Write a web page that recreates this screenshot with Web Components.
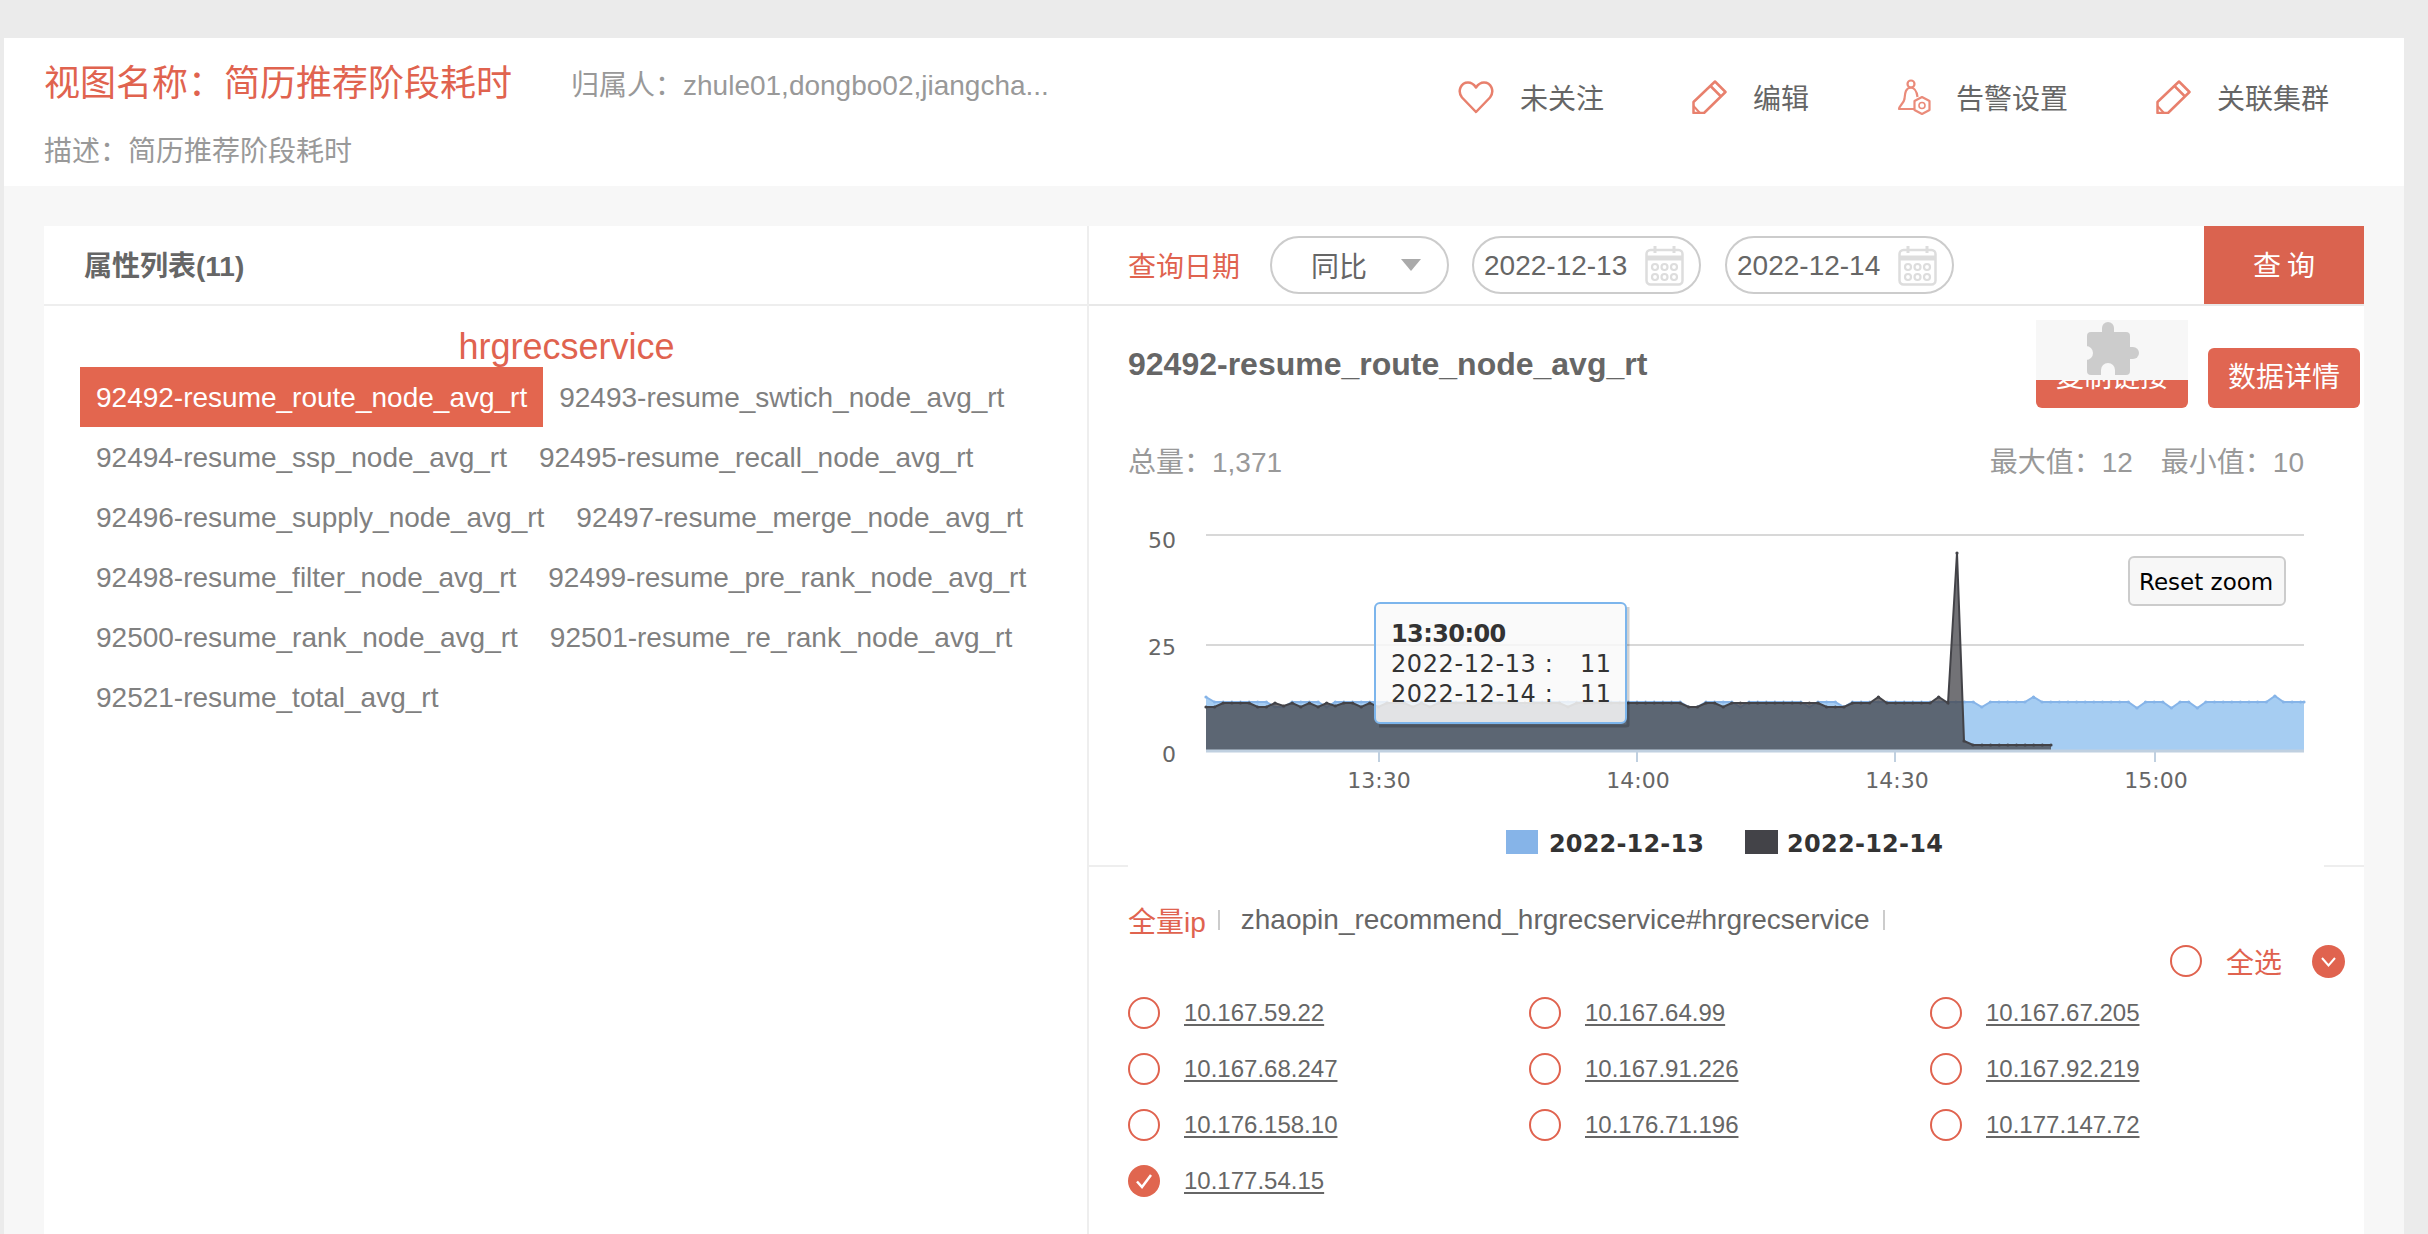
<!DOCTYPE html>
<html lang="zh">
<head>
<meta charset="utf-8">
<title>视图</title>
<style>
  html, body { margin: 0; height: 1234px; overflow: hidden; background: #ebebeb; }
  body { font-family: "Liberation Sans", "Noto Sans CJK SC", sans-serif; font-size: 28px; color: #666; }
</style>
</head>
<body>
<app-page>
  <view-header slot="header">
    <span slot="title">视图名称：简历推荐阶段耗时</span>
    <span slot="owner">归属人：zhule01,dongbo02,jiangcha...</span>
    <span slot="desc">描述：简历推荐阶段耗时</span>
    <action-item slot="actions" style="margin-right:88px">
      <svg slot="icon" width="36" height="33" viewBox="0 0 36 33" fill="none" stroke="#e8806d" stroke-width="2.5" stroke-linejoin="round"><path d="M18 31 L4 16.500 C-1 10 3 1.500 10 1.500 C13.500 1.500 16 3.500 18 6.500 C20 3.500 22.500 1.500 26 1.500 C33 1.500 37 10 32 16.500 Z"/></svg>
      未关注
    </action-item>
    <action-item slot="actions" style="margin-right:88px">
      <svg slot="icon" width="35" height="34" viewBox="0 0 35 34" fill="none" stroke="#e8806d" stroke-width="2.5" stroke-linejoin="round"><path d="M23 1.500 L33.500 12 L12 33 H1.500 V22 Z M18.500 6 L29 16.500"/><path d="M1.500 26 L8 33" stroke-width="2"/></svg>
      编辑
    </action-item>
    <action-item slot="actions" style="margin-right:88px;--gap:23px">
      <svg slot="icon" width="36" height="36" viewBox="0 0 36 36" fill="none" stroke="#ea8b7a" stroke-width="2.2" stroke-linejoin="round"><circle cx="14" cy="5" r="3.500"/><path d="M14 8.500 C8 9 8 15 7.500 20 C7 24 2 27 2 30 H18"/><path d="M14 8.500 C19 9 20 14 20.500 18"/><path d="M25 18 L32.500 22 V31 L25 35 L17.500 31 V22 Z" fill="#fff"/><circle cx="25" cy="26.500" r="3" stroke-width="1.600"/></svg>
      告警设置
    </action-item>
    <action-item slot="actions">
      <svg slot="icon" width="35" height="34" viewBox="0 0 35 34" fill="none" stroke="#e8806d" stroke-width="2.5" stroke-linejoin="round"><path d="M23 1.500 L33.500 12 L12 33 H1.500 V22 Z M18.500 6 L29 16.500"/><path d="M1.500 26 L8 33" stroke-width="2"/></svg>
      关联集群
    </action-item>
  </view-header>

  <attr-panel slot="left">
    <tag-item selected>92492-resume_route_node_avg_rt</tag-item>
    <tag-item>92493-resume_swtich_node_avg_rt</tag-item>
    <tag-item>92494-resume_ssp_node_avg_rt</tag-item>
    <tag-item>92495-resume_recall_node_avg_rt</tag-item>
    <tag-item>92496-resume_supply_node_avg_rt</tag-item>
    <tag-item>92497-resume_merge_node_avg_rt</tag-item>
    <tag-item>92498-resume_filter_node_avg_rt</tag-item>
    <tag-item>92499-resume_pre_rank_node_avg_rt</tag-item>
    <tag-item>92500-resume_rank_node_avg_rt</tag-item>
    <tag-item>92501-resume_re_rank_node_avg_rt</tag-item>
    <tag-item>92521-resume_total_avg_rt</tag-item>
  </attr-panel>

  <detail-panel slot="right">
    <query-bar slot="bar"></query-bar>
    <metric-head slot="head"></metric-head>
    <trend-chart slot="chart"></trend-chart>
    <ip-section slot="ips">
      <ip-check>10.167.59.22</ip-check>
      <ip-check>10.167.64.99</ip-check>
      <ip-check>10.167.67.205</ip-check>
      <ip-check>10.167.68.247</ip-check>
      <ip-check>10.167.91.226</ip-check>
      <ip-check>10.167.92.219</ip-check>
      <ip-check>10.176.158.10</ip-check>
      <ip-check>10.176.71.196</ip-check>
      <ip-check>10.177.147.72</ip-check>
      <ip-check checked>10.177.54.15</ip-check>
    </ip-section>
  </detail-panel>
</app-page>

<script>
const define = (name, html, init) => {
  customElements.define(name, class extends HTMLElement {
    constructor() {
      super();
      this.attachShadow({ mode: 'open' }).innerHTML = html;
      if (init) init(this.shadowRoot, this);
    }
  });
};

define('app-page', `
  <style>
    :host { display: block; padding: 38px 24px 0 4px; }
    .main { display: flex; height: 1048px; padding: 40px 40px 0; box-sizing: border-box; background: #f7f7f7; overflow: hidden; }
    .left { display: block; width: 1043px; flex: none; }
    .right { display: block; flex: 1; min-width: 0; }
    .sep { width: 2px; background: #eee; flex: none; }
  </style>
  <slot name="header"></slot>
  <div class="main">
    <div class="left"><slot name="left"></slot></div>
    <div class="sep"></div>
    <div class="right"><slot name="right"></slot></div>
  </div>`);

define('view-header', `
  <style>
    :host { display: flex; justify-content: space-between; height: 148px; background: #fff; box-sizing: border-box; padding: 17px 75px 0 40px; }
    .line { display: flex; height: 50px; align-items: center; }
    .title { font-size: 36px; color: #e0634f; margin-right: 59px; }
    .owner { color: #999; padding-top: 5px; }
    .desc { margin-top: 27px; line-height: 40px; color: #999; }
    .actions { display: flex; height: 50px; margin-top: 17px; align-items: center; }
  </style>
  <div>
    <div class="line"><span class="title"><slot name="title"></slot></span><span class="owner"><slot name="owner"></slot></span></div>
    <div class="desc"><slot name="desc"></slot></div>
  </div>
  <div class="actions"><slot name="actions"></slot></div>`);

define('action-item', `
  <style>
    :host { display: inline-flex; align-items: center; gap: var(--gap, 26px); color: #666; }
    ::slotted(svg) { display: block; }
  </style>
  <slot name="icon"></slot><span><slot></slot></span>`);

define('attr-panel', `
  <style>
    :host { display: block; background: #fff; height: 100%; }
    .head { height: 78px; line-height: 82px; padding-left: 40px; font-weight: 700; color: #666; border-bottom: 2px solid #eee; }
    .svc { padding: 20px 0 0 2px; height: 41px; line-height: 41px; text-align: center; font-size: 36px; color: #e0634f; }
    .tags { display: flex; flex-wrap: wrap; padding: 0 0 0 36px; width: 980px; }
  </style>
  <div class="head">属性列表(11)</div>
  <div class="svc">hrgrecservice</div>
  <div class="tags"><slot></slot></div>`);

define('tag-item', `
  <style>
    :host { display: block; padding: 0 16px; line-height: 62px; height: 60px; color: #808080; white-space: nowrap; }
    :host([selected]) { background: #e3664f; color: #fff; }
  </style>
  <slot></slot>`);

define('detail-panel', `
  <style>
    :host { display: block; background: #fff; height: 100%; }
  </style>
  <slot name="bar"></slot><slot name="head"></slot><slot name="chart"></slot><slot name="ips"></slot>`);

define('query-bar', `
  <style>
    :host { display: flex; align-items: center; height: 78px; padding-left: 39px; border-bottom: 2px solid #e8e8e8; }
    .label { color: #e0634f; margin-right: 30px; }
    .select { display: flex; align-items: center; box-sizing: border-box; width: 179px; height: 58px; margin-right: 23px; padding-left: 39px; border: 2px solid #ccc; border-radius: 29px; color: #666; }
    .select i { width: 0; height: 0; margin-left: 34px; border: 10px solid transparent; border-top: 12px solid #aaa; border-bottom: 0; }
    date-pill { margin-right: 24px; }
    .go { margin-left: auto; width: 160px; height: 78px; line-height: 82px; box-sizing: border-box; padding-left: 6px; text-align: center; background: #da634f; color: #fff; letter-spacing: 6px; }
  </style>
  <span class="label">查询日期</span>
  <div class="select">同比<i></i></div>
  <date-pill>2022-12-13</date-pill>
  <date-pill>2022-12-14</date-pill>
  <div class="go">查询</div>`);

define('date-pill', `
  <style>
    :host { display: flex; align-items: center; box-sizing: border-box; width: 229px; height: 58px; padding-left: 10px; border: 2px solid #ccc; border-radius: 29px; color: #666; line-height: 36px; }
    span { padding-top: 2px; }
    svg { margin-left: 18px; flex: none; }
  </style>
  <span><slot></slot></span>
  <svg width="39" height="41" viewBox="0 0 39 41" fill="none">
    <rect x="1.500" y="5" width="36" height="34.500" rx="4" stroke="#ddd" stroke-width="2.500"/>
    <path d="M1.500 13 H37.500" stroke="#ddd" stroke-width="5"/>
    <path d="M10 1 V8 M29 1 V8" stroke="#ddd" stroke-width="3"/>
    <g stroke="#ddd" stroke-width="2.200">
      <circle cx="10" cy="22" r="3"/><circle cx="19.500" cy="22" r="3"/><circle cx="29" cy="22" r="3"/>
      <circle cx="10" cy="32" r="3"/><circle cx="19.500" cy="32" r="3"/><circle cx="29" cy="32" r="3"/>
    </g>
  </svg>`);

define('metric-head', `
  <style>
    :host { display: block; position: relative; height: 177px; box-sizing: border-box; padding: 42px 60px 0 39px; }
    .top { display: flex; height: 60px; margin-right: -56px; }
    .name { font-size: 32px; line-height: 32px; font-weight: 700; color: #666; flex: 1; }
    .btn { width: 152px; height: 60px; line-height: 60px; text-align: center; background: #e06652; color: #fff; border-radius: 6px; margin-left: 20px; }
    .stats { display: flex; justify-content: space-between; margin-top: 35px; line-height: 40px; color: #999; }
    .stats b { font-weight: 400; margin-left: 28px; }
    .ext { position: absolute; top: 14px; right: 176px; }
  </style>
  <div class="top">
    <div class="name">92492-resume_route_node_avg_rt</div>
    <div class="btn">复制链接</div>
    <div class="btn">数据详情</div>
  </div>
  <div class="stats"><span>总量：1,371</span><span>最大值：12<b>最小值：10</b></span></div>
  <svg class="ext" width="152" height="60" viewBox="0 0 152 60">
    <rect width="152" height="60" fill="#f7f7f7"/>
    <rect x="51" y="12" width="43" height="43" rx="4" fill="#ccc"/>
    <circle cx="72" cy="8" r="6" fill="#ccc"/><rect x="66" y="8" width="12" height="6" fill="#ccc"/>
    <circle cx="97" cy="33" r="6" fill="#ccc"/><rect x="92" y="27" width="5" height="12" fill="#ccc"/>
    <circle cx="50" cy="33" r="7" fill="#f7f7f7"/>
    <circle cx="72" cy="50" r="7" fill="#f7f7f7"/><rect x="65" y="50" width="14" height="6" fill="#f7f7f7"/>
  </svg>`);

// chart drawn on page coordinates so the viewBox reads the same as the reference
const chartX = i => 1206 + i * 8.62;
const blueDips = { 0: 697, 8: 707, 9: 707, 14: 707, 22: 707, 31: 707, 37: 707, 56: 707, 57: 707, 62: 707, 70: 707, 74: 707, 90: 707, 96: 697, 108: 708, 112: 708, 115: 708, 124: 696 };
const darkDips = { 0: 707, 1: 707, 6: 707, 7: 707, 9: 706, 11: 707, 13: 707, 15: 706, 18: 707, 20: 707, 24: 707, 26: 707, 42: 707, 56: 707, 57: 707, 60: 707, 72: 707, 73: 707, 74: 707, 78: 697, 85: 697 };
const bluePts = [];
for (let i = 0; i <= 127; i++) bluePts.push([chartX(i), blueDips[i] || 702]);
bluePts.push([2304, 702]);
const darkPts = [];
for (let i = 0; i <= 85; i++) darkPts.push([chartX(i), darkDips[i] || 703]);
darkPts.push([1948, 703], [1957, 553], [1964, 741], [1973, 745]);
for (let x = 1982; x <= 2053; x += 8.62) darkPts.push([x, 745]);
const poly = pts => pts.map(p => p[0].toFixed(1) + ',' + p[1]).join(' ');
const dots = (pts, c) => pts.map(p => `<circle cx="${p[0].toFixed(1)}" cy="${p[1]}" r="1.600" fill="${c}"/>`).join('');
const lastDark = darkPts[darkPts.length - 1][0].toFixed(1);

define('trend-chart', `
  <style>
    :host { display: block; height: 382px; }
    svg { display: block; }
    text { font-family: "DejaVu Sans", sans-serif; }
    .ax { font-size: 22px; fill: #666; }
    .lg { font-size: 24px; font-weight: 700; fill: #333; }
    .tip { font-size: 24px; fill: #333; letter-spacing: .6px; }
  </style>
  <svg width="1275" height="382" viewBox="1089 483 1275 382">
    <path d="M1206 535 H2304 M1206 645 H2304" stroke="#d8d8d8" stroke-width="2"/>
    <text class="ax" x="1176" y="548" text-anchor="end">50</text>
    <text class="ax" x="1176" y="655" text-anchor="end">25</text>
    <text class="ax" x="1176" y="762" text-anchor="end">0</text>
    <polygon points="1206,751 ${poly(bluePts)} 2304,751" fill="#7cb5ec" fill-opacity=".68"/>
    <polyline points="${poly(bluePts)}" fill="none" stroke="#86b4e8" stroke-width="2"/>
    ${dots(bluePts, '#86b4e8')}
    <polygon points="1206,751 ${poly(darkPts)} ${lastDark},751" fill="#434348" fill-opacity=".75"/>
    <polyline points="${poly(darkPts)}" fill="none" stroke="#434348" stroke-width="2"/>
    ${dots(darkPts, '#434348')}
    <path d="M1206 751 H2304" stroke="#c0d0e0" stroke-width="3"/>
    <path d="M1379 751 V762 M1637 751 V762 M1895 751 V762 M2155 751 V762" stroke="#c0d0e0" stroke-width="2"/>
    <text class="ax" x="1379" y="788" text-anchor="middle">13:30</text>
    <text class="ax" x="1638" y="788" text-anchor="middle">14:00</text>
    <text class="ax" x="1897" y="788" text-anchor="middle">14:30</text>
    <text class="ax" x="2156" y="788" text-anchor="middle">15:00</text>
    <rect x="1506" y="830" width="32" height="24" fill="#86b4e8"/>
    <text class="lg" x="1549" y="852" textLength="155">2022-12-13</text>
    <rect x="1745" y="830" width="33" height="24" fill="#434348"/>
    <text class="lg" x="1787" y="852" textLength="156">2022-12-14</text>
    <path d="M1628 607 V725 Q1628 726 1626 726 H1379" fill="none" stroke="#000" stroke-opacity=".18" stroke-width="3"/>
    <rect x="1375" y="603" width="251" height="120" rx="5" fill="#f9f9f9" fill-opacity=".85" stroke="#7cb5ec" stroke-width="2"/>
    <text class="tip" x="1391" y="642" style="font-weight:700;letter-spacing:-.6px">13:30:00</text>
    <text class="tip" x="1391" y="672">2022-12-13 :</text>
    <text class="tip" x="1580" y="672">11</text>
    <text class="tip" x="1391" y="702">2022-12-14 :</text>
    <text class="tip" x="1580" y="702">11</text>
    <rect x="2129" y="557" width="156" height="48" rx="5" fill="#f7f7f7" stroke="#ccc" stroke-width="2"/>
    <text x="2139" y="590" style="font-size:23px" fill="#000">Reset zoom</text>
  </svg>`);

define('ip-section', `
  <style>
    :host { display: block; }
    .rule { display: flex; justify-content: space-between; height: 2px; }
    .rule i { height: 2px; background: #eee; }
    .rule i:first-child { width: 39px; }
    .rule i:last-child { width: 40px; }
    .src { display: flex; align-items: center; height: 40px; margin-top: 33px; padding-left: 39px; color: #666; }
    .all { color: #e0634f; }
    .bar { width: 2px; height: 20px; background: #ccc; margin: 0 21px 0 12px; }
    .src .bar:last-child { margin-left: 13px; }
    .pick { display: flex; justify-content: flex-end; align-items: center; height: 32px; margin-top: 5px; padding-right: 19px; color: #e0634f; }
    .pick span { margin: 0 30px 0 24px; }
    .radio { width: 32px; height: 32px; box-sizing: border-box; border: 2px solid #e0634f; border-radius: 50%; }
    .pick svg { display: block; }
    .grid { display: grid; grid-template-columns: repeat(3, 401px); grid-auto-rows: 56px; margin-top: 8px; padding-left: 39px; }
  </style>
  <div class="rule"><i></i><i></i></div>
  <div class="src"><span class="all">全量ip</span><i class="bar"></i>zhaopin_recommend_hrgrecservice#hrgrecservice<i class="bar"></i></div>
  <div class="pick">
    <div class="radio"></div><span>全选</span>
    <svg width="33" height="33" viewBox="0 0 33 33"><circle cx="16.500" cy="16.500" r="16.500" fill="#e0634f"/><path d="M10 13 L16.500 20.500 L23 13" fill="none" stroke="#fff" stroke-width="2"/></svg>
  </div>
  <div class="grid"><slot></slot></div>`);

define('ip-check', `
  <style>
    :host { display: flex; align-items: center; gap: 24px; font-size: 24px; color: #666; }
    span { text-decoration: underline; text-underline-offset: 3px; }
    .radio { display: block; width: 32px; height: 32px; flex: none; }
    .off { display: block; }
    .on { display: none; }
    :host([checked]) .off { display: none; }
    :host([checked]) .on { display: block; }
  </style>
  <svg class="radio off" viewBox="0 0 32 32"><circle cx="16" cy="16" r="15" fill="none" stroke="#e0634f" stroke-width="2"/></svg>
  <svg class="radio on" viewBox="0 0 32 32"><circle cx="16" cy="16" r="16" fill="#e0664f"/><path d="M9 16.500 L14 22 L23 10" fill="none" stroke="#fff" stroke-width="2.500"/></svg>
  <span><slot></slot></span>`);
</script>
</body>
</html>
